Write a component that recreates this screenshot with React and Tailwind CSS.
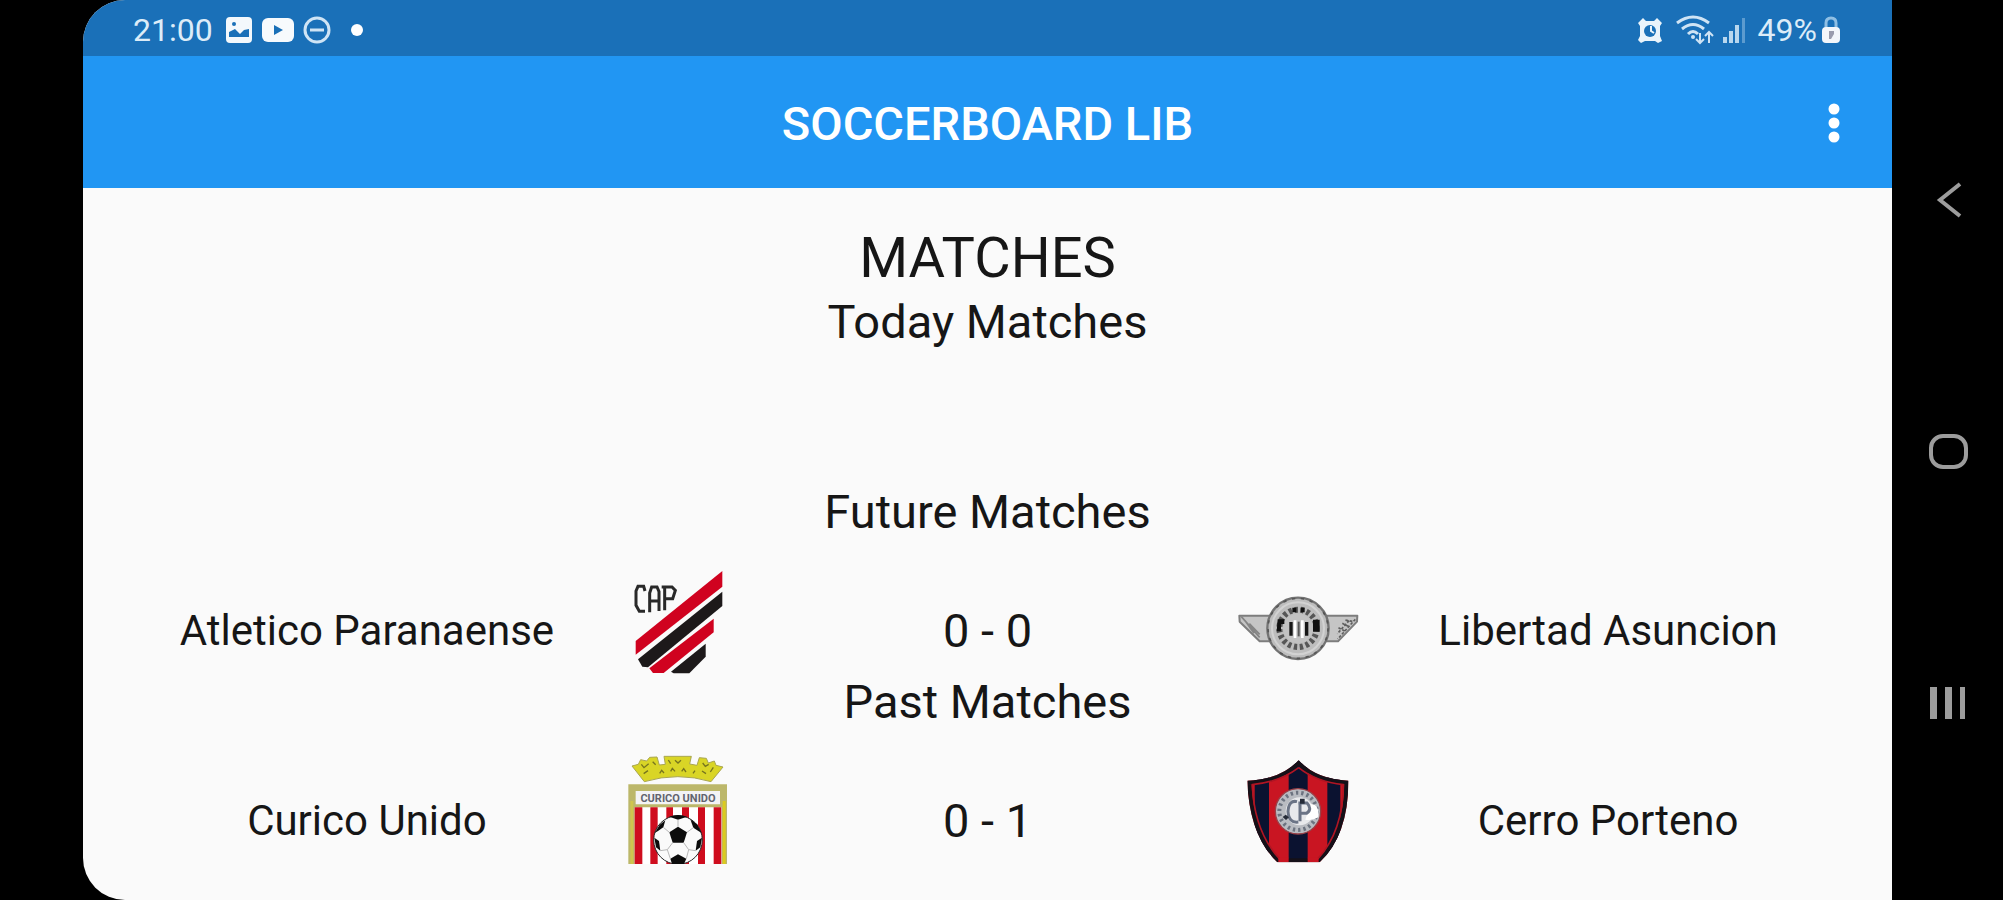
import React from "react";

function ParanaenseCrest() {
  return (
    <svg viewBox="63 39 330 330" className="h-[110px] w-[110px]" role="img" aria-label="Atletico Paranaense crest">
      <path d="M104 270 L364 60 V107 L104 311 Z" fill="#d0021f" />
      <path d="M111 325 L364 122 V165 L141 349 L124 347 Z" fill="#1d191a" />
      <path d="M145 352 L338 203 V244 L188 366 H156 Z" fill="#d0021f" />
      <path d="M210 362 L314 278 V317 L265 367 H218 Z" fill="#1d191a" />
      <g fill="none" stroke="#292929" strokeWidth="9">
        <path d="M132 120 L128 106 H111 L105 120 V163 L115 181 H132" />
        <path d="M146 184 V126 L152 108 H168 L174 122 V180 M147 150 H174" />
        <path d="M191 178 V108 H213 L223 118 L215 143 H193 M182 108 H192" />
      </g>
    </svg>
  );
}

function CuricoCrest() {
  return (
    <svg viewBox="63 39 330 330" className="h-[110px] w-[110px]" role="img" aria-label="Curico Unido crest">
      <path
        d="M93 75 L112 70 L119 56 L137 60 L146 49 L168 48 L175 72 L193 70 L189 46 H271 L266 69 L288 73 L295 50 L316 52 L322 66 L340 60 L345 73 L366 78 L330 122 Q231 92 130 122 Z"
        fill="#d9d526"
        stroke="#a9a652"
        strokeWidth="3"
      />
      <g fill="none" stroke="#77751f" strokeWidth="4">
        <path d="M121 70 l8 10 l14 -12 M128 98 l13 -9 M155 62 l9 9 M176 97 l6 -9 l7 8 M202 57 l7 11 M222 58 l9 8 l9 -8 M209 91 l5 -9 l8 9 M242 91 l6 -8 l7 10 M276 97 l6 -8 M305 66 l8 10 l10 -6 M303 90 l12 8 M337 79 l-9 14" />
      </g>
      <path d="M82 130 H378 V369 H82 Z" fill="#bcb76a" />
      <path d="M365 180 H374 V369 H365 Z" fill="#dccb1d" />
      <path d="M88 180 H97 V369 H88 Z" fill="#cfc54d" />
      <path d="M104 150 H357 V190 H104 Z" fill="#f3f3f5" />
      <path d="M101 199 H362 V369 H101 Z" fill="#fff" />
      <g fill="#cf0d1e">
        <path d="M101 199 H124 V369 H101 Z M148 199 H170 V369 H148 Z M196 199 H216 V369 H196 Z M243 199 H264 V369 H243 Z M291 199 H312 V369 H291 Z M338 199 H361 V369 H338 Z" />
      </g>
      <text x="231" y="182" textAnchor="middle" fontSize="33" fontWeight="700" fill="#62646f" fontFamily="Roboto, sans-serif">
        CURICO UNIDO
      </text>
      <circle cx="231" cy="297" r="73" fill="#fafafa" stroke="#292929" strokeWidth="3" />
      <g fill="#0c0c0c">
        <path d="M231 257 L258 274 L248 305 H215 L205 274 Z" />
        <path d="M205 227 Q231 217 258 227 L231 236 Z" />
        <path d="M161 276 L176 251 L193 238 L187 259 L171 270 Z" />
        <path d="M268 235 L288 250 L302 276 L291 269 L277 260 Z" />
        <path d="M160 290 L174 300 L178 329 L165 319 Z" />
        <path d="M303 290 L288 300 L284 329 L298 319 Z" />
        <path d="M208 353 L231 340 L256 353 L249 369 H213 Z" />
      </g>
      <path
        d="M231 257 V236 M258 274 L277 260 M248 305 L263 326 M215 305 L199 326 M205 274 L187 259 M178 329 L199 326 L208 353 M284 329 L263 326 L256 353"
        fill="none"
        stroke="#b8b8b8"
        strokeWidth="3"
      />
    </svg>
  );
}

function LibertadCrest() {
  return (
    <svg viewBox="42 -51 378 330" className="h-[110px] w-[126px]" role="img" aria-label="Libertad Asuncion crest">
      <g fill="#c5c5c5" stroke="#7d7d7d" strokeWidth="6" strokeLinejoin="round">
        <path d="M55 104 H150 V181 H116 L56 122 Z" />
        <path d="M409 104 H313 V181 H351 L408 122 Z" />
      </g>
      <path d="M61 107 L116 169 M73 120 L99 157 M85 128 L116 160" stroke="#858585" strokeWidth="5" />
      <path d="M403 115 L350 174 M394 121 L371 117 M382 136 L364 127 M371 150 L352 140 M384 119 L349 158" stroke="#5f5f5f" strokeWidth="5" strokeDasharray="8 5" />
      <circle cx="231" cy="142" r="92" fill="#bdbdbd" stroke="#737373" strokeWidth="7" />
      <circle cx="231" cy="142" r="90" fill="none" stroke="#555" strokeWidth="5" strokeDasharray="10 17" />
      <circle cx="231" cy="142" r="78" fill="none" stroke="#d2d2d2" strokeWidth="6" />
      <circle cx="231" cy="142" r="56" fill="none" stroke="#565656" strokeWidth="18" strokeDasharray="10 8" />
      <circle cx="231" cy="142" r="44" fill="#c2c2c2" />
      <path d="M170 115 h20 v14 h-10 v22 h-13 z M276 116 h20 v36 h-20 z M214 80 h12 v14 h-12 z M239 80 h12 v14 h-12 z" fill="#111" />
      <path d="M210 123 V164 M257 123 V164" stroke="#161616" strokeWidth="10" />
      <path d="M222 118 V171 M244 118 V171" stroke="#fff" strokeWidth="8" />
      <path d="M233 122 V166" stroke="#555" strokeWidth="6" />
    </svg>
  );
}

function CerroCrest() {
  return (
    <svg viewBox="66 39 330 330" className="h-[110px] w-[110px]" role="img" aria-label="Cerro Porteno crest">
      <defs>
        <clipPath id="cerro-shield">
          <path d="M233 58 Q286 115 382 119 Q383 281 296 364 H169 Q84 281 79 119 Q177 116 233 58 Z" />
        </clipPath>
      </defs>
      <g clipPath="url(#cerro-shield)">
        <path d="M70 50 H390 V369 H70 Z" fill="#c91522" />
        <path d="M101 50 H144 V369 H101 Z M203 50 H260 V369 H203 Z M319 50 H358 V369 H319 Z" fill="#0b1230" />
        <path d="M233 58 Q286 115 382 119 Q383 281 296 364 H169 Q84 281 79 119 Q177 116 233 58 Z" fill="none" stroke="#151018" strokeWidth="24" />
        <path d="M233 80 Q286 123 367 131 Q366 270 291 353 M233 80 Q177 123 94 131 Q99 270 175 353" fill="none" stroke="#b01523" strokeWidth="5" />
        <path d="M172 350 H203 V369 H172 Z M260 350 H293 V369 H260 Z" fill="#c91522" />
      </g>
      <circle cx="231" cy="211" r="68" fill="#b9bcc2" stroke="#9b4148" strokeWidth="4" />
      <circle cx="231" cy="211" r="56" fill="none" stroke="#6c7380" strokeWidth="12" strokeDasharray="7 9" />
      <circle cx="236" cy="211" r="42" fill="#e8e9ec" />
      <path d="M268 190 Q295 188 292 229 Q276 239 253 236 Z" fill="#fff" />
      <path d="M228 182 Q204 176 201 211 Q203 247 232 243 M237 188 V241 M232 186 H258 Q275 204 257 217 H239" fill="none" stroke="#6b7486" strokeWidth="9" />
      <path d="M237 173 h14 v15 h-14 z M194 221 l10 8 l-9 8 l-10 -9 z" fill="#252b38" />
    </svg>
  );
}

function SectionTitle({ children }) {
  return <h2 className="text-center text-[47px] leading-[56px]">{children}</h2>;
}

function MatchRow({ home, away, score, homeCrest, awayCrest }) {
  return (
    <div className="mt-6 grid grid-cols-[5fr_3fr_5fr_3fr_5fr] items-center justify-items-center px-[90px] text-[42px] leading-[48px]">
      <span className="pt-6 whitespace-nowrap">{home}</span>
      {homeCrest}
      <span className="pt-6 text-[47px] whitespace-nowrap">{score}</span>
      {awayCrest}
      <span className="pt-6 whitespace-nowrap">{away}</span>
    </div>
  );
}

function StatusBar() {
  return (
    <div className="flex h-14 items-center justify-between bg-[#1a70b8] pr-[51px] pl-[50px] text-[32px] leading-none text-[#dcecf8]">
      <div className="flex items-center pt-1">
        <span className="mr-3">21:00</span>
        <svg viewBox="0 0 28 28" className="mr-2 h-7 w-7" aria-hidden="true">
          <rect x="1" y="1" width="26" height="26" rx="4" fill="#f3f8fc" />
          <path d="M4 21 V16 L10 13 L15 18 L19 14 L24 13 V21 Z" fill="#1a70b8" />
          <circle cx="9" cy="8" r="2" fill="#1a70b8" />
        </svg>
        <svg viewBox="0 0 34 26" className="mr-2 h-[26px] w-[34px]" aria-hidden="true">
          <rect x="1" y="1" width="32" height="24" rx="6" fill="#f7fafd" />
          <path d="M13 8 L22 13 L13 18 Z" fill="#1a70b8" />
        </svg>
        <svg viewBox="0 0 28 28" className="h-7 w-7" fill="none" stroke="#cfe4f5" strokeWidth="3" aria-hidden="true">
          <circle cx="14" cy="14" r="12" />
          <path d="M7 14 H21" />
        </svg>
        <span className="ml-5 h-3 w-3 rounded-full bg-white" />
      </div>
      <div className="flex items-center pt-1">
        <svg viewBox="0 0 28 28" className="mr-3 h-7 w-7" aria-hidden="true">
          <path d="M2 7 L7 2 L10 5 H18 L21 2 L26 7 L24 10 V20 L26 25 L22 27 L19 25 H9 L5 27 L2 24 L4 20 V10 Z" fill="#eaf4fb" />
          <circle cx="14" cy="15" r="6" fill="#1a70b8" />
          <path d="M15 10 V15 L18 17" fill="none" stroke="#eaf4fb" strokeWidth="2" />
        </svg>
        <svg viewBox="0 0 38 30" className="mr-2 h-[30px] w-[38px]" fill="none" stroke="#cfe4f5" strokeWidth="3" aria-hidden="true">
          <path d="M1 8 Q17 -4 33 8 M6 14 Q17 5 28 14 M12 19 Q17 14 22 19" />
          <path d="M24 18 V28 M20 24 L24 28 L28 24 M33 28 V17 M29 21 L33 17 L37 21" strokeWidth="2" />
          <circle cx="17" cy="22" r="2" fill="#cfe4f5" stroke="none" />
        </svg>
        <svg viewBox="0 0 24 26" className="mr-3 h-[26px] w-6" aria-hidden="true">
          <path d="M1 20 H5 V26 H1 Z M7 14 H11 V26 H7 Z M13 8 H17 V26 H13 Z" fill="#b9d7ee" />
          <path d="M20 1 H23 V26 H20 Z" fill="#5c9bcf" />
        </svg>
        <span className="mr-1">49%</span>
        <svg viewBox="0 0 20 28" className="h-7 w-5" aria-hidden="true">
          <path d="M5 12 V7 Q5 2 10 2 Q15 2 15 7 V12" fill="none" stroke="#8fbfe4" strokeWidth="3" />
          <rect x="1" y="11" width="18" height="16" rx="4" fill="#f3f6fa" />
          <path d="M8 15 H13 V18 L10 23 H8 Z" fill="#9a9cad" />
        </svg>
      </div>
    </div>
  );
}

function SystemNav() {
  return (
    <nav aria-label="System navigation" className="flex w-[111px] shrink-0 flex-col items-center justify-between pt-[176px] pb-[173px] text-[#9c9c9c]">
      <button type="button" aria-label="Back" className="h-12 w-12">
        <svg viewBox="0 0 48 48" className="h-12 w-12" fill="none" stroke="currentColor" strokeWidth="4">
          <path d="M36 8 L16 24 L36 40" />
        </svg>
      </button>
      <button type="button" aria-label="Home" className="h-12 w-12">
        <svg viewBox="0 0 48 48" className="h-12 w-12" fill="none" stroke="currentColor" strokeWidth="4">
          <rect x="7" y="8" width="35" height="31" rx="12" />
        </svg>
      </button>
      <button type="button" aria-label="Recent apps" className="h-12 w-12">
        <svg viewBox="0 0 48 48" className="h-12 w-12" fill="currentColor">
          <path d="M6 8 H13 V40 H6 Z M21 8 H28 V40 H21 Z M36 8 H41 V40 H36 Z" />
        </svg>
      </button>
    </nav>
  );
}

export default function App() {
  return (
    <div className="flex min-h-screen bg-black pl-[83px] font-['Roboto',sans-serif]">
      <div className="min-w-0 flex-1 overflow-hidden rounded-l-[42px] bg-[#fafafa] text-[#161616]">
        <StatusBar />
        <header className="grid h-[132px] grid-cols-[1fr_auto_1fr] items-center bg-[#2196f3] pt-1 text-white">
          <h1 className="col-start-2 text-[47px] leading-[56px] font-medium">SOCCERBOARD LIB</h1>
          <button type="button" aria-label="More options" className="mr-[34px] h-12 w-12 justify-self-end">
            <svg viewBox="0 0 48 48" className="h-12 w-12" fill="currentColor">
              <circle cx="24" cy="9" r="5.5" />
              <circle cx="24" cy="23" r="5.5" />
              <circle cx="24" cy="37" r="5.5" />
            </svg>
          </button>
        </header>
        <main className="pt-[34px]">
          <p className="text-center text-[56px] leading-[72px]">MATCHES</p>
          <section className="min-h-[190px]">
            <SectionTitle>Today Matches</SectionTitle>
          </section>
          <section>
            <SectionTitle>Future Matches</SectionTitle>
            <MatchRow
              home="Atletico Paranaense"
              away="Libertad Asuncion"
              score="0 - 0"
              homeCrest={<ParanaenseCrest />}
              awayCrest={<LibertadCrest />}
            />
          </section>
          <section>
            <SectionTitle>Past Matches</SectionTitle>
            <MatchRow
              home="Curico Unido"
              away="Cerro Porteno"
              score="0 - 1"
              homeCrest={<CuricoCrest />}
              awayCrest={<CerroCrest />}
            />
          </section>
        </main>
      </div>
      <SystemNav />
    </div>
  );
}
